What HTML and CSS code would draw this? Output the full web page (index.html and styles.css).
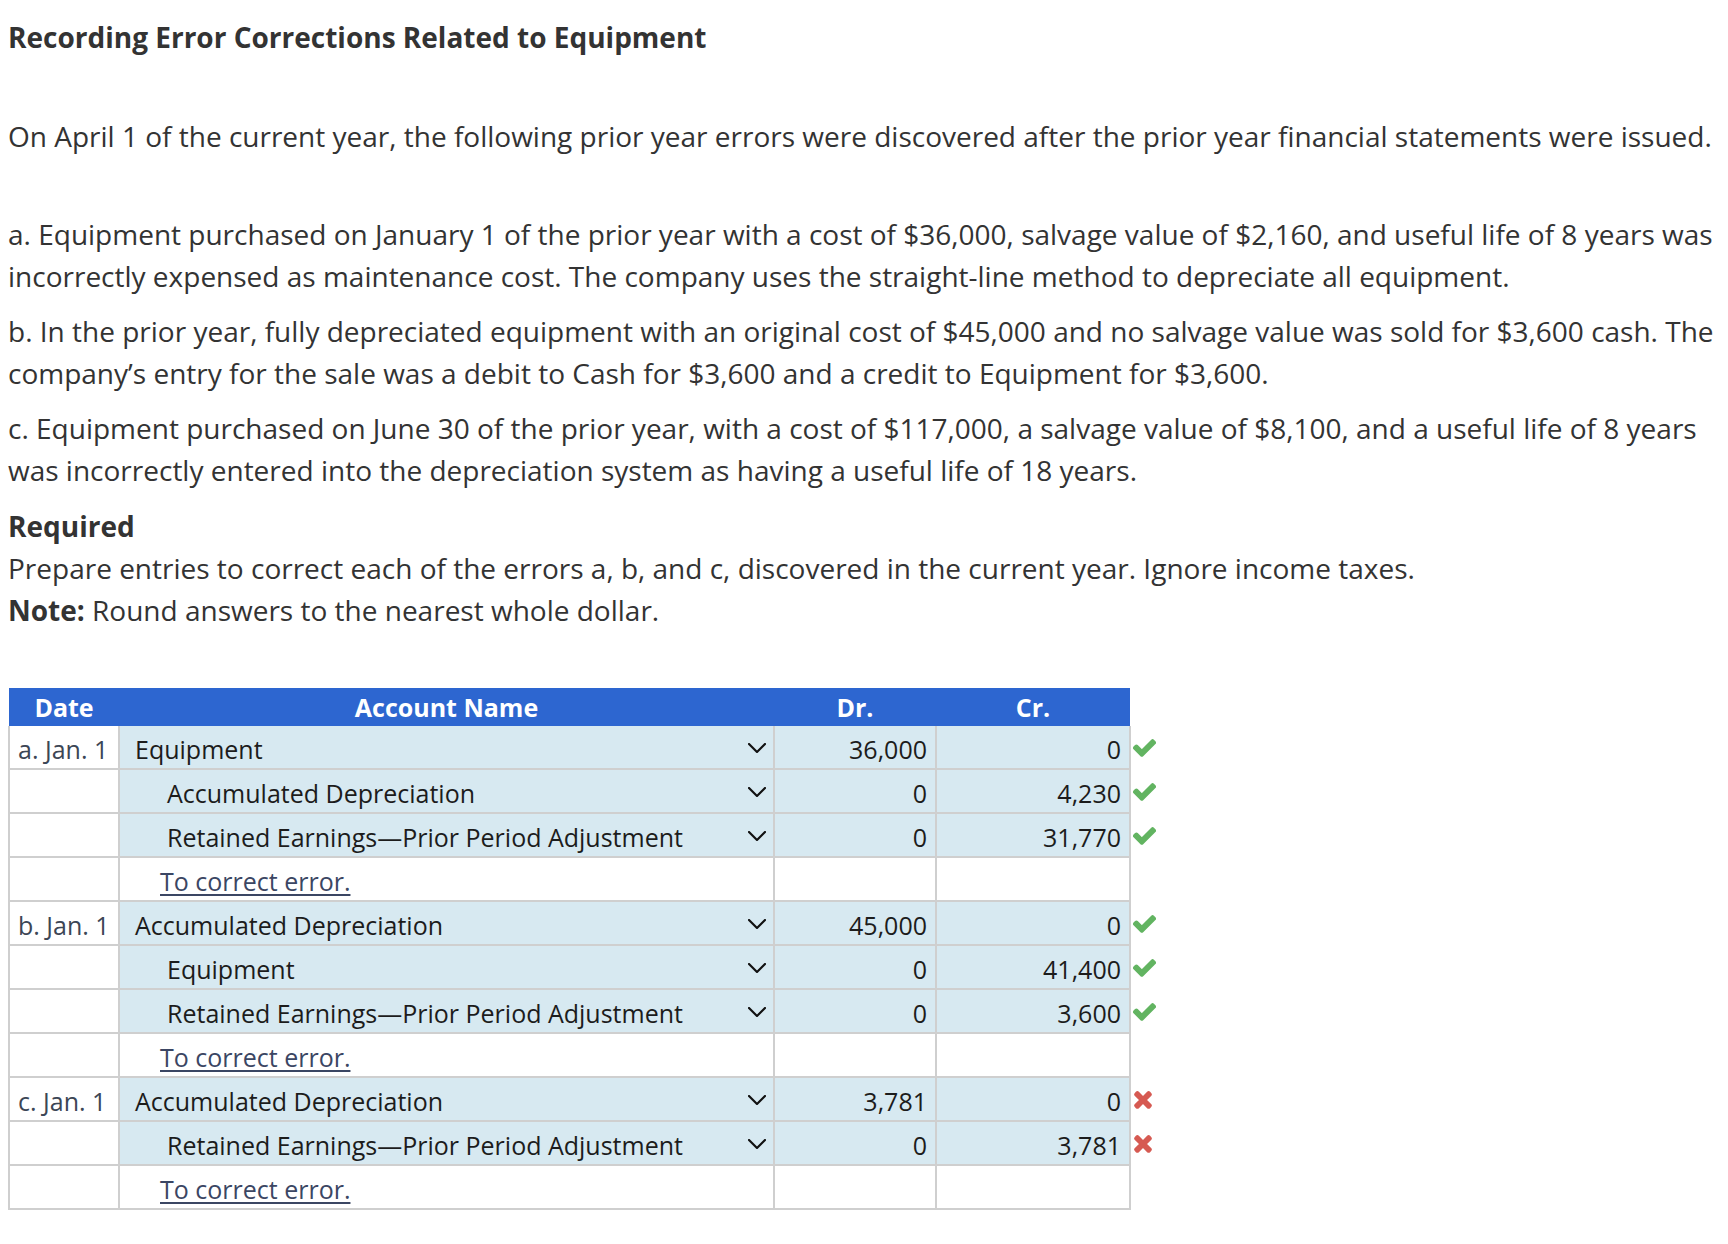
FILE: index.html
```html
<!DOCTYPE html>
<html>
<head>
<meta charset="utf-8">
<link rel="stylesheet" href="styles.css">
</head>
<body>
<div class="page">
  <h1 class="title">Recording Error Corrections Related to Equipment</h1>
  <p class="intro">On April 1 of the current year, the following prior year errors were discovered after the prior year financial statements were issued.</p>
  <p class="item first">a. Equipment purchased on January 1 of the prior year with a cost of $36,000, salvage value of $2,160, and useful life of 8 years was incorrectly expensed as maintenance cost. The company uses the straight-line method to depreciate all equipment.</p>
  <p class="item">b. In the prior year, fully depreciated equipment with an original cost of $45,000 and no salvage value was sold for $3,600 cash. The company’s entry for the sale was a debit to Cash for $3,600 and a credit to Equipment for $3,600.</p>
  <p class="item">c. Equipment purchased on June 30 of the prior year, with a cost of $117,000, a salvage value of $8,100, and a useful life of 8 years was incorrectly entered into the depreciation system as having a useful life of 18 years.</p>
  <div class="required">
    <div class="req-title">Required</div>
    <div>Prepare entries to correct each of the errors a, b, and c, discovered in the current year. Ignore income taxes.</div>
    <div><strong>Note:</strong> Round answers to the nearest whole dollar.</div>
  </div>

  <table class="journal">
    <colgroup>
      <col class="c-date"><col class="c-acct"><col class="c-dr"><col class="c-cr"><col class="c-mark">
    </colgroup>
    <thead>
      <tr><th>Date</th><th>Account Name</th><th>Dr.</th><th>Cr.</th><th class="mark"></th></tr>
    </thead>
    <tbody>
      <tr>
        <td class="date">a. Jan. 1</td>
        <td class="acct"><div class="sel"><span>Equipment</span><svg class="chev" viewBox="0 0 18 10"><polyline points="1,1 9,9 17,1"/></svg></div></td>
        <td class="num">36,000</td><td class="num">0</td>
        <td class="mark"><svg class="ok" viewBox="-20 44 552 424"><path d="M173.898 439.404l-166.4-166.4c-9.997-9.997-9.997-26.206 0-36.204l36.203-36.204c9.997-9.998 26.207-9.998 36.204 0L192 312.69 432.095 72.596c9.997-9.997 26.207-9.997 36.204 0l36.203 36.204c9.997 9.997 9.997 26.206 0 36.204l-294.4 294.401c-9.998 9.997-26.207 9.997-36.204-.001z"/></svg></td>
      </tr>
      <tr>
        <td class="date"></td>
        <td class="acct"><div class="sel cr"><span>Accumulated Depreciation</span><svg class="chev" viewBox="0 0 18 10"><polyline points="1,1 9,9 17,1"/></svg></div></td>
        <td class="num">0</td><td class="num">4,230</td>
        <td class="mark"><svg class="ok" viewBox="-20 44 552 424"><path d="M173.898 439.404l-166.4-166.4c-9.997-9.997-9.997-26.206 0-36.204l36.203-36.204c9.997-9.998 26.207-9.998 36.204 0L192 312.69 432.095 72.596c9.997-9.997 26.207-9.997 36.204 0l36.203 36.204c9.997 9.997 9.997 26.206 0 36.204l-294.4 294.401c-9.998 9.997-26.207 9.997-36.204-.001z"/></svg></td>
      </tr>
      <tr>
        <td class="date"></td>
        <td class="acct"><div class="sel cr"><span>Retained Earnings—Prior Period Adjustment</span><svg class="chev" viewBox="0 0 18 10"><polyline points="1,1 9,9 17,1"/></svg></div></td>
        <td class="num">0</td><td class="num">31,770</td>
        <td class="mark"><svg class="ok" viewBox="-20 44 552 424"><path d="M173.898 439.404l-166.4-166.4c-9.997-9.997-9.997-26.206 0-36.204l36.203-36.204c9.997-9.998 26.207-9.998 36.204 0L192 312.69 432.095 72.596c9.997-9.997 26.207-9.997 36.204 0l36.203 36.204c9.997 9.997 9.997 26.206 0 36.204l-294.4 294.401c-9.998 9.997-26.207 9.997-36.204-.001z"/></svg></td>
      </tr>
      <tr class="memo">
        <td class="date"></td>
        <td class="acct"><a class="note" href="#">To correct error.</a></td>
        <td></td><td></td><td class="mark"></td>
      </tr>

      <tr>
        <td class="date">b. Jan. 1</td>
        <td class="acct"><div class="sel"><span>Accumulated Depreciation</span><svg class="chev" viewBox="0 0 18 10"><polyline points="1,1 9,9 17,1"/></svg></div></td>
        <td class="num">45,000</td><td class="num">0</td>
        <td class="mark"><svg class="ok" viewBox="-20 44 552 424"><path d="M173.898 439.404l-166.4-166.4c-9.997-9.997-9.997-26.206 0-36.204l36.203-36.204c9.997-9.998 26.207-9.998 36.204 0L192 312.69 432.095 72.596c9.997-9.997 26.207-9.997 36.204 0l36.203 36.204c9.997 9.997 9.997 26.206 0 36.204l-294.4 294.401c-9.998 9.997-26.207 9.997-36.204-.001z"/></svg></td>
      </tr>
      <tr>
        <td class="date"></td>
        <td class="acct"><div class="sel cr"><span>Equipment</span><svg class="chev" viewBox="0 0 18 10"><polyline points="1,1 9,9 17,1"/></svg></div></td>
        <td class="num">0</td><td class="num">41,400</td>
        <td class="mark"><svg class="ok" viewBox="-20 44 552 424"><path d="M173.898 439.404l-166.4-166.4c-9.997-9.997-9.997-26.206 0-36.204l36.203-36.204c9.997-9.998 26.207-9.998 36.204 0L192 312.69 432.095 72.596c9.997-9.997 26.207-9.997 36.204 0l36.203 36.204c9.997 9.997 9.997 26.206 0 36.204l-294.4 294.401c-9.998 9.997-26.207 9.997-36.204-.001z"/></svg></td>
      </tr>
      <tr>
        <td class="date"></td>
        <td class="acct"><div class="sel cr"><span>Retained Earnings—Prior Period Adjustment</span><svg class="chev" viewBox="0 0 18 10"><polyline points="1,1 9,9 17,1"/></svg></div></td>
        <td class="num">0</td><td class="num">3,600</td>
        <td class="mark"><svg class="ok" viewBox="-20 44 552 424"><path d="M173.898 439.404l-166.4-166.4c-9.997-9.997-9.997-26.206 0-36.204l36.203-36.204c9.997-9.998 26.207-9.998 36.204 0L192 312.69 432.095 72.596c9.997-9.997 26.207-9.997 36.204 0l36.203 36.204c9.997 9.997 9.997 26.206 0 36.204l-294.4 294.401c-9.998 9.997-26.207 9.997-36.204-.001z"/></svg></td>
      </tr>
      <tr class="memo">
        <td class="date"></td>
        <td class="acct"><a class="note" href="#">To correct error.</a></td>
        <td></td><td></td><td class="mark"></td>
      </tr>

      <tr>
        <td class="date">c. Jan. 1</td>
        <td class="acct"><div class="sel"><span>Accumulated Depreciation</span><svg class="chev" viewBox="0 0 18 10"><polyline points="1,1 9,9 17,1"/></svg></div></td>
        <td class="num">3,781</td><td class="num">0</td>
        <td class="mark"><svg class="bad" viewBox="-20 60 392 392"><path d="M242.72 256l100.07-100.07c12.28-12.28 12.28-32.19 0-44.48l-22.24-22.24c-12.28-12.28-32.19-12.28-44.48 0L176 189.28 75.930 89.21c-12.28-12.28-32.19-12.28-44.48 0L9.21 111.45c-12.28 12.28-12.28 32.19 0 44.48L109.28 256 9.21 356.07c-12.28 12.28-12.28 32.19 0 44.48l22.24 22.24c12.28 12.28 32.2 12.28 44.48 0L176 322.72l100.07 100.07c12.28 12.28 32.2 12.28 44.48 0l22.24-22.24c12.28-12.28 12.28-32.19 0-44.48L242.72 256z"/></svg></td>
      </tr>
      <tr>
        <td class="date"></td>
        <td class="acct"><div class="sel cr"><span>Retained Earnings—Prior Period Adjustment</span><svg class="chev" viewBox="0 0 18 10"><polyline points="1,1 9,9 17,1"/></svg></div></td>
        <td class="num">0</td><td class="num">3,781</td>
        <td class="mark"><svg class="bad" viewBox="-20 60 392 392"><path d="M242.72 256l100.07-100.07c12.28-12.28 12.28-32.19 0-44.48l-22.24-22.24c-12.28-12.28-32.19-12.28-44.48 0L176 189.28 75.930 89.21c-12.28-12.28-32.19-12.28-44.48 0L9.21 111.45c-12.28 12.28-12.28 32.19 0 44.48L109.28 256 9.21 356.07c-12.28 12.28-12.28 32.19 0 44.48l22.24 22.24c12.28 12.28 32.2 12.28 44.48 0L176 322.72l100.07 100.07c12.28 12.28 32.2 12.28 44.48 0l22.24-22.24c12.28-12.28 12.28-32.19 0-44.48L242.72 256z"/></svg></td>
      </tr>
      <tr class="memo">
        <td class="date"></td>
        <td class="acct"><a class="note" href="#">To correct error.</a></td>
        <td></td><td></td><td class="mark"></td>
      </tr>
    </tbody>
  </table>
</div>
</body>
</html>
```

FILE: styles.css
```css
html, body {
  margin: 0;
  padding: 0;
  background: #fff;
}

body {
  font-family: "Open Sans", "DejaVu Sans", sans-serif;
  color: #333;
  font-size: 28px;
  line-height: 42px;
}

.page {
  padding: 16px 8px 0 8px;
}

.title {
  margin: 0;
  font-size: 28px;
  font-weight: 700;
  line-height: 42px;
  color: #333;
}

.intro {
  margin: 57px 0 0 0;
}

.item {
  margin: 13px 0 0 0;
}

.item.first {
  margin-top: 56px;
}

.required {
  margin-top: 14px;
}

.req-title {
  font-weight: 700;
}

.required strong {
  font-weight: 700;
}

.journal {
  margin-top: 57px;
  border-collapse: collapse;
  table-layout: fixed;
  width: 1147px;
  font-size: 25px;
  color: #1c1c1c;
}

.c-date { width: 110px; }
.c-acct { width: 655px; }
.c-dr { width: 162px; }
.c-cr { width: 194px; }
.c-mark { width: 26px; }

.journal th {
  background: #2d66d0;
  color: #fff;
  font-weight: 700;
  height: 38px;
  padding: 0;
  line-height: 38px;
  text-align: center;
}

.journal th.mark {
  background: transparent;
}

.journal td {
  height: 39px;
  padding: 3px 0 0 0;
  border: 2px solid #cfcfcf;
  background: #d7e9f1;
  vertical-align: middle;
  line-height: 32px;
}

.journal thead + tbody tr:first-child td {
  border-top: 0;
}

.journal td.date {
  background: #fff;
  color: #3c4655;
  padding-left: 8px;
  white-space: nowrap;
}

.journal td.num {
  text-align: right;
  padding-right: 8px;
}

.journal td.mark {
  border: 0;
  background: transparent;
  padding-left: 2px;
}

.journal tr.memo td {
  background: #fff;
}

.journal tr.memo td.mark {
  background: transparent;
}

.sel {
  display: flex;
  align-items: center;
  justify-content: space-between;
  padding: 0 7px 0 15px;
}

.sel.cr {
  padding-left: 47px;
}

.chev {
  width: 18px;
  height: 10px;
  fill: none;
  stroke: #111;
  stroke-width: 2.2;
  stroke-linecap: round;
  stroke-linejoin: round;
  flex: none;
  margin-top: -1px;
}

.note {
  color: #3b4663;
  text-decoration: underline;
  margin-left: 40px;
  text-underline-offset: 3px;
}

.ok {
  display: block;
  width: 23px;
  height: 18px;
  margin-top: -2px;
  fill: #62b461;
  stroke: #62b461;
  stroke-width: 40;
  stroke-linejoin: round;
}

.bad {
  display: block;
  width: 18px;
  height: 18px;
  margin-top: -2px;
  margin-left: 1px;
  fill: #d65a52;
  stroke: #d65a52;
  stroke-width: 30;
  stroke-linejoin: round;
}
```
